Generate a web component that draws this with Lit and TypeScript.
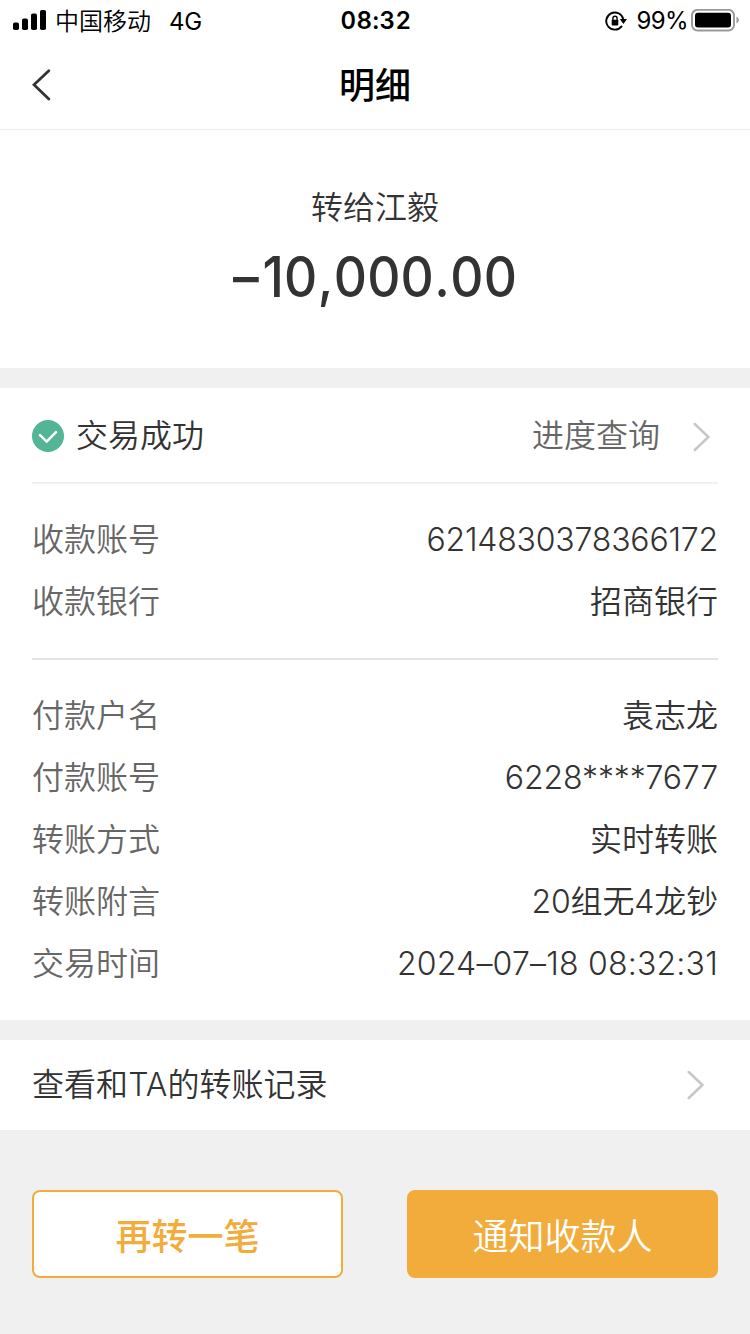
import { LitElement, html, css, svg } from "lit";
import { customElement } from "lit/decorators.js";

interface Field {
  label: string;
  value: string;
  kind: string;
}

const payee: Field[] = [
  { label: "收款账号", value: "6214830378366172", kind: "account" },
  { label: "收款银行", value: "招商银行", kind: "" },
];

const payer: Field[] = [
  { label: "付款户名", value: "袁志龙", kind: "" },
  { label: "付款账号", value: "6228****7677", kind: "masked" },
  { label: "转账方式", value: "实时转账", kind: "" },
  { label: "转账附言", value: "20组无4龙钞", kind: "memo" },
  { label: "交易时间", value: "2024–07–18 08:32:31", kind: "time" },
];

const chevron = svg`<path d="M1.8 1 L15.3 14 L1.8 27" fill="none" stroke="#c8c8c8" stroke-width="2.6" stroke-linecap="round" />`;

@customElement("app-root")
export class AppRoot extends LitElement {
  static styles = css`
    :host {
      display: flex;
      flex-direction: column;
      width: 750px;
      height: 1334px;
      overflow: hidden;
      background: #f0f0f0;
      color: #333;
      font-family: Inter, "Noto Sans CJK SC", sans-serif;
      font-size: 32px;
      font-weight: 350;
      white-space: nowrap;
    }
    * { box-sizing: border-box; flex-shrink: 0; }
    svg { display: block; }
    .status {
      display: grid;
      grid-template-columns: 1fr auto 1fr;
      align-items: center;
      height: 40px;
      padding: 0 11px 0 13px;
      background: #fff;
      color: #000;
      font-size: 24px;
      line-height: 40px;
      font-weight: 400;
    }
    .left, .right { display: flex; align-items: center; height: 40px; }
    .carrier { margin-left: 9px; padding-top: 3px; font-weight: 350; }
    .net { margin-left: 18px; padding-top: 2px; letter-spacing: -0.3px; }
    .clock { font-weight: 600; letter-spacing: 0.5px; padding-top: 1px; font-feature-settings: "tnum"; }
    .right { justify-content: flex-end; }
    .pct { margin: 0 3px 0 9px; padding-top: 1px; letter-spacing: -0.6px; }
    .nav {
      display: grid;
      grid-template-columns: 60px 1fr 60px;
      align-items: center;
      height: 90px;
      padding: 0 32px;
      border-bottom: 1px solid #ececec;
      background: #fff;
    }
    .title {
      padding-top: 3px;
      color: #000;
      font-size: 36px;
      font-weight: 500;
      text-align: center;
      line-height: 86px;
    }
    .summary {
      height: 238px;
      padding-top: 55px;
      background: #fff;
      text-align: center;
    }
    .to { line-height: 46px; }
    .amount {
      margin-top: 12px;
      font-size: 56px;
      line-height: 68px;
      font-weight: 500;
      letter-spacing: 0.2px;
      transform: scaleX(0.92);
    }
    .minus { margin-right: 4px; }
    .sep { margin: 0 0.2px; }
    .detail { margin-top: 20px; height: 632px; padding: 0 32px; background: #fff; }
    .state {
      display: flex;
      align-items: center;
      height: 96px;
      padding: 2px 8px 0 0;
      border-bottom: 2px solid #f0f0f0;
    }
    .done { margin-left: 12px; flex: 1; padding-bottom: 6px; }
    .query { color: #666; margin-right: 33px; padding-bottom: 6px; }
    .arrow { margin-top: 3px; }
    .group { padding: 25px 0; }
    .group + .group { border-top: 2px solid #e4e4e4; }
    .row { display: flex; justify-content: space-between; height: 62px; line-height: 61px; }
    .label { color: #666; }
    .account { letter-spacing: -0.2px; }
    .masked { letter-spacing: -0.15px; }
    .memo { letter-spacing: -0.15px; }
    .time { letter-spacing: 0.2px; }
    .history {
      display: flex;
      align-items: center;
      justify-content: space-between;
      margin-top: 20px;
      height: 90px;
      padding: 0 46px 0 32px;
      background: #fff;
    }
    .records { padding-bottom: 7px; letter-spacing: 0.05px; }
    .actions { display: grid; grid-template-columns: 311px 311px; justify-content: space-between; padding: 60px 32px 56px; }
    .btn {
      height: 88px;
      border: 2px solid #f2ac3c;
      border-radius: 8px;
      font-size: 36px;
      line-height: 90px;
      text-align: center;
    }
    .again { background: #fff; color: #f2ac3c; font-weight: 500; }
    .notify { background: #f2ac3c; color: #fff; }
  `;

  private rows(fields: Field[]) {
    return html`<div class="group">
      ${fields.map(
        (f) => html`<div class="row"><span class="label">${f.label}</span><span class="value ${f.kind}">${f.value}</span></div>`
      )}
    </div>`;
  }

  render() {
    return html`
      <div class="status">
        <div class="left">
          <svg width="33" height="22" viewBox="0 0 33 22">
            <rect x="0" y="12.5" width="6" height="7.5" rx="1.8" />
            <rect x="9" y="8.5" width="6" height="11.5" rx="1.8" />
            <rect x="18" y="3.5" width="6" height="16.5" rx="1.8" />
            <rect x="27" y="0" width="6" height="20" rx="1.8" />
          </svg>
          <span class="carrier">中国移动</span>
          <span class="net">4G</span>
        </div>
        <div class="clock">08:32</div>
        <div class="right">
          <svg width="22" height="20" viewBox="0 0 22 20">
            <path d="M18.2 8 A8.6 8.6 0 1 0 16.6 15.4" fill="none" stroke="#000" stroke-width="1.9" stroke-linecap="round" />
            <path d="M14.8 8 h7.2 l-3.6 5z" />
            <rect x="6.7" y="8.7" width="6.6" height="5.7" rx="0.8" />
            <path d="M7.9 9 V7.3 a2.1 2.1 0 0 1 4.2 0 V9" fill="none" stroke="#000" stroke-width="1.4" />
          </svg>
          <span class="pct">99%</span>
          <svg width="48" height="23" viewBox="0 0 48 23">
            <rect x="1" y="0.9" width="42" height="20.6" rx="5.5" fill="none" stroke="#999" stroke-width="1.9" />
            <rect x="4" y="3.8" width="36" height="14.8" rx="3" />
            <path d="M45.5 7.5 q2.4 1.2 2.4 3.5 t-2.4 3.5z" fill="#999" />
          </svg>
        </div>
      </div>
      <div class="nav">
        <svg width="20" height="32" viewBox="0 0 20 32">
          <path d="M16.8 1.8 L2 15.8 L16.8 30" fill="none" stroke="#333" stroke-width="2.8" stroke-linecap="round" />
        </svg>
        <div class="title">明细</div>
      </div>
      <div class="summary">
        <div class="to">转给江毅</div>
        <div class="amount"><span class="minus">–</span>10<span class="sep">,</span>000<span class="sep">.</span>00</div>
      </div>
      <div class="detail">
        <div class="state">
          <svg width="32" height="32" viewBox="0 0 32 32">
            <circle cx="16" cy="16" r="16" fill="#53b596" />
            <path d="M8 15.2 L14.7 21.6 L24 12.2" fill="none" stroke="#fff" stroke-width="2.5" stroke-linecap="round" stroke-linejoin="round" />
          </svg>
          <span class="done">交易成功</span>
          <span class="query">进度查询</span>
          <svg class="arrow" width="17" height="29" viewBox="0 0 17 29">${chevron}</svg>
        </div>
        ${this.rows(payee)}${this.rows(payer)}
      </div>
      <div class="history">
        <span class="records">查看和TA的转账记录</span>
        <svg width="17" height="29" viewBox="0 0 17 29">${chevron}</svg>
      </div>
      <div class="actions">
        <div class="btn again">再转一笔</div>
        <div class="btn notify">通知收款人</div>
      </div>
    `;
  }
}
